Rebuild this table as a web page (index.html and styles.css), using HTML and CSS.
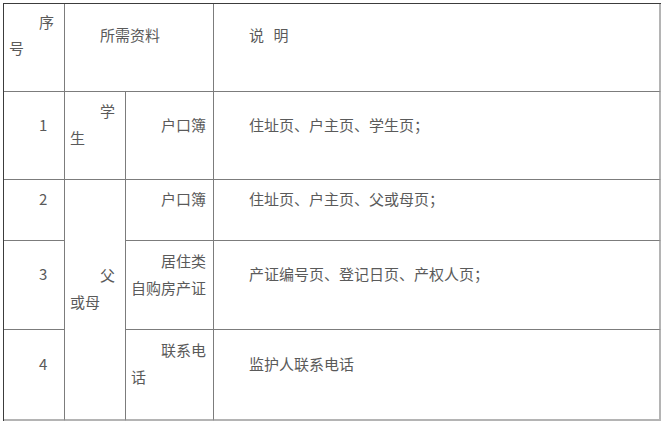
FILE: index.html
```html
<!DOCTYPE html>
<html lang="zh-CN">
<head>
<meta charset="utf-8">
<title>所需资料</title>
<link rel="stylesheet" href="styles.css">
</head>
<body>
<table class="materials">
  <colgroup>
    <col class="c-no">
    <col class="c-who">
    <col class="c-doc">
    <col class="c-note">
  </colgroup>
  <tr class="r-head">
    <td class="tight">序<br><span class="noindent">号</span></td>
    <td colspan="2">所需资料</td>
    <td class="last"><span class="spaced">说 明</span></td>
  </tr>
  <tr class="r-1">
    <td>1</td>
    <td class="tight">学<br>生</td>
    <td>户口簿</td>
    <td class="last">住址页、户主页、学生页；</td>
  </tr>
  <tr class="r-2">
    <td>2</td>
    <td class="tight bottom" rowspan="3">父<br>或母</td>
    <td>户口簿</td>
    <td class="last">住址页、户主页、父或母页；</td>
  </tr>
  <tr class="r-3">
    <td>3</td>
    <td class="tight">居住类<br>自购房产证</td>
    <td class="last">产证编号页、登记日页、产权人页；</td>
  </tr>
  <tr class="r-4">
    <td class="bottom">4</td>
    <td class="tight bottom">联系电<br>话</td>
    <td class="last bottom">监护人联系电话</td>
  </tr>
</table>
</body>
</html>
```

FILE: styles.css
```css
html, body {
  margin: 0;
  padding: 0;
  background: #ffffff;
}

body {
  padding: 3px 0 0 3px;
  font-family: "Noto Sans CJK SC", "Noto Sans", sans-serif;
  font-size: 15px;
  color: #5a5a5a;
}

.materials {
  border-collapse: separate;
  border-spacing: 0;
  table-layout: fixed;
  width: 658px;
  border-top: 1px solid #3c3c3c;
  border-left: 1px solid #3c3c3c;
}

.c-no { width: 61px; }
.c-who { width: 61px; }
.c-doc { width: 88px; }
.c-note { width: 447px; }

.materials td {
  box-sizing: border-box;
  padding: 0 5px 23px 5px;
  vertical-align: middle;
  text-align: left;
  text-indent: 30px;
  line-height: 27px;
  border-right: 1px solid #7c7c7c;
  border-bottom: 1px solid #7c7c7c;
  white-space: nowrap;
  overflow: hidden;
}

.materials td.last {
  border-right: 2px solid #b4b4b4;
}

.materials td.bottom {
  border-bottom: 2px solid #b4b4b4;
}

.r-head td { line-height: 26px; padding-bottom: 25px; }

.r-head { height: 88px; }
.r-1 { height: 88px; }
.r-2 { height: 61px; }
.r-3 { height: 89px; }
.r-4 { height: 91px; }

.spaced {
  word-spacing: 6px;
}
```
